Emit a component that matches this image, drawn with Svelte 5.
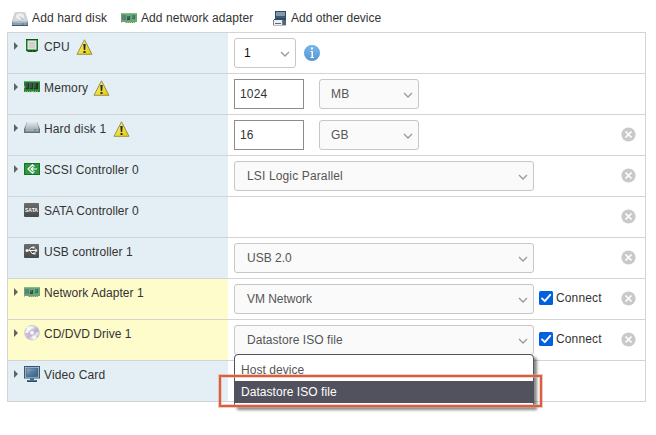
<script>
  const rows = [
    { name: 'CPU', icon: 'cpu', arrow: true, warn: true, select: '1', width: 62, active: true, info: true },
    { name: 'Memory', icon: 'memory', arrow: true, warn: true, input: '1024', unit: 'MB', nameWidth: 43 },
    { name: 'Hard disk 1', icon: 'disk', arrow: true, warn: true, input: '16', unit: 'GB', remove: true, nameWidth: 63 },
    { name: 'SCSI Controller 0', icon: 'scsi', arrow: true, select: 'LSI Logic Parallel', width: 300, remove: true, spacing: 0.08 },
    { name: 'SATA Controller 0', icon: 'sata', remove: true, spacing: 0.02 },
    { name: 'USB controller 1', icon: 'usb', select: 'USB 2.0', width: 300, remove: true, spacing: 0.08, valueSpacing: 0 },
    { name: 'Network Adapter 1', icon: 'network', arrow: true, select: 'VM Network', width: 300, connect: true, remove: true, changed: true, spacing: 0.06, valueSpacing: -0.04 },
    { name: 'CD/DVD Drive 1', icon: 'cd', arrow: true, select: 'Datastore ISO file', width: 300, connect: true, remove: true, changed: true, menu: true, spacing: 0, valueSpacing: 0.05 },
    { name: 'Video Card', icon: 'video', arrow: true }
  ];
  const actions = [
    { name: 'Add hard disk', icon: 'harddrive', width: 109, spacing: 0.14 },
    { name: 'Add network adapter', icon: 'network', width: 151, spacing: 0.08 },
    { name: 'Add other device', icon: 'device', width: 120, spacing: 0.01 }
  ];
</script>

<svg width="0" height="0" class="defs" aria-hidden="true">
  <defs>
    <linearGradient id="warnFill" x2="1" y2="1"><stop stop-color="#fff681" /><stop offset="1" stop-color="#e4c900" /></linearGradient>
    <linearGradient id="infoFill" x2="0" y2="1"><stop stop-color="#75b8ef" /><stop offset="1" stop-color="#5797cf" /></linearGradient>
    <linearGradient id="metal" x2="0" y2="1"><stop stop-color="#e5e9ec" /><stop offset="1" stop-color="#aab3ba" /></linearGradient>
    <linearGradient id="screen" x2="1" y2="1"><stop stop-color="#9bb6cb" /><stop offset=".5" stop-color="#567d9f" /><stop offset="1" stop-color="#365f85" /></linearGradient>
    <linearGradient id="disc" x2="1" y2="1"><stop stop-color="#d8d8dc" /><stop offset=".3" stop-color="#f5f4f8" /><stop offset=".52" stop-color="#c5add5" /><stop offset=".72" stop-color="#e5e8ee" /><stop offset="1" stop-color="#9d9da9" /></linearGradient>
    <linearGradient id="dark" x2="0" y2="1"><stop stop-color="#6c6c6c" /><stop offset="1" stop-color="#484848" /></linearGradient>
  </defs>
</svg>

{#snippet icon(type)}
  <svg class="icon" width="16" height="16" viewBox="0 0 16 16" aria-hidden="true">
    {#if type === 'harddrive'}
      <path d="M3 2H13L16 11V16H0V11Z" fill="#b9c0c5" />
      <path d="M3 2H13L15 11H1Z" fill="#d4d9dd" />
      <ellipse cx="8" cy="6.5" rx="4.8" ry="3.7" fill="#eceeef" stroke="#bac0c5" stroke-width=".6" />
      <path d="M8 6.5L11 9.5" stroke="#a0a8ad" />
      <path d="M0 12H16V16H0Z" fill="#75889c" />
      <path d="M1 12.5H15M1 14H10" stroke="#a6b5c3" />
      <path d="M12 14H14" stroke="#9ec6a1" />
      <path d="M0 15.5H16" stroke="#44576a" />
    {:else if type === 'network'}
      <path d="M0 3H16V12H14V13H4V12H0Z" fill="#63a976" />
      <path d="M0 3.5H16" stroke="#88b992" />
      <path d="M1 5H5V10H1Z" fill="#4c6f67" />
      <path d="M6 6H9V10H6Z" fill="#354e4b" />
      <path d="M11 5H14V9H11Z" fill="#416d57" />
      <path d="M2 5V10M4 5V10M7 5V8M12 5V8" stroke="#83a395" stroke-width=".7" />
      <path d="M4 12.5H14" stroke="#d3c26c" stroke-dasharray="1 1" />
      <path d="M0 3V13" stroke="#84938c" />
    {:else if type === 'device'}
      <path d="M3 1H14V10H2V9H3Z" fill="#2e4a66" />
      <path d="M4 2H13V6H4Z" fill="#8298ab" />
      <path d="M4 7H13" stroke="#516b83" />
      <path d="M1 10H14V15.5H1Z" fill="#74818c" />
      <path d="M2 10H10V15H2Z" fill="#eceeee" />
      <path d="M3 13.5H9" stroke="#5b6c79" />
      <path d="M11 10H14V15H11Z" fill="#52677a" />
    {:else if type === 'cpu'}
      <path d="M2 1H14V13H12V14H4V13H2Z" fill="#18771d" />
      <path d="M2 1H14V2H2Z" fill="#075913" />
      <rect x="4" y="3" width="8" height="8" fill="#cfd0cf" stroke="#eff2ed" />
      <path d="M5 11.5H12.5V4" fill="none" stroke="#82a785" />
      <path d="M3 13H13" stroke="#042c09" stroke-dasharray="2 1" />
    {:else if type === 'memory'}
      <path d="M0 2H16V13H9L8 12L7 13H0V9L1 8L0 7Z" fill="#238035" />
      <path d="M0 2.5H16" stroke="#65b268" />
      <path d="M2 4H5V10H2ZM6 4H9V10H6ZM10 4H14V10H10Z" fill="#26312a" />
      <path d="M3 4V9M7 4V9M11 4V9" stroke="#7b857e" stroke-width=".7" />
      <path d="M1 12.5H15" stroke="#8abb66" stroke-width="1.5" stroke-dasharray="1 1" />
    {:else if type === 'disk'}
      <path d="M3 2H13L16 9V13H0V9Z" fill="#66707a" />
      <path d="M3 2H13L15 9H1Z" fill="url(#metal)" />
      <path d="M1 9H15V12H1Z" fill="#86909a" />
      <path d="M2 10H10" stroke="#c0c7ce" />
      <path d="M12 10.5H14" stroke="#72dc7e" />
    {:else if type === 'scsi'}
      <rect x=".5" y="2.5" width="15" height="11" fill="#2d963e" stroke="#137424" />
      <path d="M10.5 5.6L8.4 3.7L4 8L8.4 12.3L10.5 10.4M7 8H13M9.2 6L7.1 8L9.2 10" fill="none" stroke="white" stroke-width="1.2" />
    {:else if type === 'sata'}
      <rect y="1" width="15" height="14" rx="1" fill="url(#dark)" />
      <text x="1" y="10.2" textLength="13" lengthAdjust="spacingAndGlyphs">SATA</text>
    {:else if type === 'usb'}
      <rect y="1" width="15" height="14" rx="1" fill="url(#dark)" />
      <path d="M2 7.5H13M4.5 7.5L7 4.5H9M6 7.5L8 10.5H10M11 5.8L13.2 7.5L11 9.2" stroke="#f2f2f2" fill="none" />
      <circle cx="3" cy="7.5" r="1.5" fill="#f2f2f2" />
      <path d="M8.5 3.5H10.5V5.5H8.5ZM9.5 9.5H11.5V11.5H9.5Z" fill="#f2f2f2" />
    {:else if type === 'cd'}
      <circle cx="8" cy="7.7" r="7.3" fill="url(#disc)" stroke="#b4b4ba" stroke-width=".7" />
      <path d="M8 8L2 3L5 1Z" fill="#fff" opacity=".8" />
      <path d="M8 8L1 8L2 11Z" fill="#d4b4da" />
      <path d="M8 8L13 3L15 7Z" fill="#c0b0d4" />
      <path d="M8 8L13 13L9 15Z" fill="#f7f8f8" />
      <circle cx="8" cy="7.7" r="2.7" fill="#e9e9ed" stroke="#aaa8b4" stroke-width=".7" />
      <circle cx="8" cy="7.7" r="1.1" fill="#fff" />
    {:else if type === 'video'}
      <rect x=".5" y=".5" width="15" height="11.5" fill="#d7e1e9" stroke="#365873" />
      <rect x="2" y="2" width="12" height="8.5" fill="url(#screen)" stroke="#34566f" stroke-width=".7" />
      <path d="M6 12H10V14H13V16H3V14H6Z" fill="#4d7291" />
      <path d="M3 15.5H13" stroke="#2e506c" />
    {/if}
  </svg>
{/snippet}

{#snippet select(value, width, active, spacing, unit)}
  <div class="select" class:active class:unit style:width="{width}px">
    <span style:letter-spacing="{spacing ?? 0.14}px">{value}</span>
    <svg width="10" height="6" viewBox="0 0 10 6"><path d="M1 1L5 5L9 1" fill="none" stroke="#999" stroke-width="1.3" /></svg>
  </div>
{/snippet}

<main>
  <div class="toolbar">
    {#each actions as action}
      <div class="action" style:width="{action.width}px">{@render icon(action.icon)}<span style:letter-spacing="{action.spacing}px">{action.name}</span></div>
    {/each}
  </div>
  <div class="hardware">
    {#each rows as row}
      <div class="row">
        <div class="label" class:changed={row.changed}>
          <span class="expander">{#if row.arrow}<svg width="4" height="8" viewBox="0 0 4 8"><path d="M0 0L4 4L0 8Z" fill="#626262" /></svg>{/if}</span>
          {@render icon(row.icon)}
          <span class="name" style:letter-spacing="{row.spacing ?? 0.14}px" style:width={row.nameWidth ? `${row.nameWidth}px` : 'auto'}>{row.name}</span>
          {#if row.warn}
            <svg class="warning" width="17" height="16" viewBox="0 0 17 16"><path d="M8.5 .8L16 15.3H1Z" fill="url(#warnFill)" stroke="#95914e" stroke-linejoin="round" /><path d="M7.3 5H9.7L9.2 11H7.8ZM7.5 12H9.5V14H7.5Z" fill="#292929" /></svg>
          {/if}
        </div>
        <div class="value">
          {#if row.input}
            <div class="input">{row.input}</div>
            {@render select(row.unit, 100, false, 0.14, true)}
          {:else if row.select}
            {@render select(row.select, row.width, row.active, row.valueSpacing, false)}
          {/if}
          {#if row.info}
            <svg class="info" width="16" height="16" viewBox="0 0 16 16"><circle cx="8" cy="8" r="7.7" fill="url(#infoFill)" stroke="#5798d0" stroke-width=".6" /><path d="M7 2.5H9V4.5H7ZM6.5 6H9V12H10V13H6.5V12H7.5V7H6.5Z" fill="white" /></svg>
          {/if}
          {#if row.connect}
            <div class="connect"><svg width="14" height="14" viewBox="0 0 14 14"><rect width="14" height="14" rx="1.5" fill="#0060df" /><path d="M3 7.4L5.8 10.2L11.2 3.8" fill="none" stroke="white" stroke-width="1.9" stroke-linecap="round" stroke-linejoin="round" /></svg><span>Connect</span></div>
          {/if}
          {#if row.remove}
            <svg class="remove" width="15" height="15" viewBox="0 0 15 15"><circle cx="7.5" cy="7.5" r="7.1" fill="#c9c9c9" /><path d="M4.5 4.5L10.5 10.5M10.5 4.5L4.5 10.5" stroke="white" stroke-width="1.7" /></svg>
          {/if}
          {#if row.menu}
            <div class="menu"><div>Host device</div><div class="chosen">Datastore ISO file</div></div>
            <div class="highlight"></div>
          {/if}
        </div>
      </div>
    {/each}
  </div>
</main>

<style>
  :global(body) { margin: 0; background: white; }
  main { box-sizing: border-box; width: 656px; height: 435px; padding-left: 7px; overflow: hidden; font: 12px/16px "Liberation Sans", Arial, sans-serif; letter-spacing: .14px; color: #333; }
  svg { display: block; flex-shrink: 0; }
  .defs { position: absolute; }
  .toolbar { height: 32px; box-sizing: border-box; padding: 10px 0 0 5px; display: flex; }
  .action { display: flex; gap: 4px; white-space: nowrap; }
  .action:last-child { gap: 3px; }
  .hardware { width: 637px; border: 1px solid #d2d4d6; border-bottom: 0; }
  .row { display: flex; height: 40px; border-bottom: 1px solid #d2d4d6; }
  .label { box-sizing: border-box; width: 220px; padding: 5px 0 0 6px; display: flex; align-items: flex-start; background: #e4eff5; }
  .label.changed { background: #fffccb; }
  .expander { width: 10px; padding-top: 4px; }
  .name { margin: 1px 0 0 4px; white-space: nowrap; }
  .warning { margin: 1px 0 0 6px; }
  .value { position: relative; flex: 1; display: flex; align-items: flex-start; padding: 5px 0 0 6px; }
  .select { box-sizing: border-box; height: 30px; border: 1px solid #c7c7c7; border-radius: 3px; background: #fafafa; display: flex; align-items: center; justify-content: space-between; padding: 0 5px 0 12px; color: #555; }
  .select.unit { padding-left: 11px; }
  .select svg { margin-top: 2px; }
  .select.active { background: white; color: #111; padding-left: 9px; }
  .input { box-sizing: border-box; width: 70px; height: 30px; margin-right: 15px; padding: 6px 5px; border: 1px solid #8c8c8c; }
  .info { margin: 7px 0 0 8px; }
  .connect { display: flex; gap: 3px; margin: 6px 0 0 5px; }
  .connect svg { margin-top: 1px; }
  .remove { margin: 7px 9px 0 auto; }
  .menu { position: absolute; z-index: 1; left: 6px; top: 34px; width: 300px; height: 53px; box-sizing: border-box; padding-top: 4px; border: 1px solid #52525e; border-radius: 4px 4px 0 0; background: white; box-shadow: 3px 3px 3px #0007; color: #555; letter-spacing: .05px; }
  .menu div { height: 22px; line-height: 22px; padding-left: 6px; }
  .menu .chosen { background: #52525e; color: white; }
  .highlight { position: absolute; z-index: 2; left: -9px; top: 55px; width: 323px; height: 32px; box-sizing: border-box; border: 2px solid #d95f42; box-shadow: 0 0 0 1px #e9a08a88, inset 0 0 0 1px #edac9888; }
  text { font: bold 5.8px "Liberation Sans", sans-serif; letter-spacing: 0; fill: white; }
</style>
